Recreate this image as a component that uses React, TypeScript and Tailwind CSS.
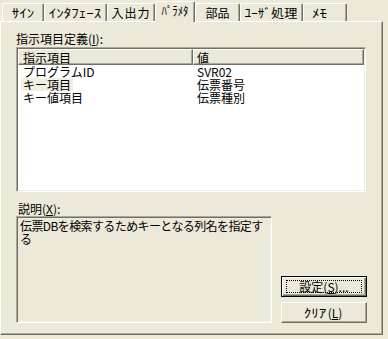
import React from "react";

function Tab({
  w,
  selected,
  extra,
  children,
}: {
  w: string;
  selected?: boolean;
  extra?: string;
  children: React.ReactNode;
}) {
  const base =
    "flex items-center border-t border-l border-t-white border-l-white border-r border-r-[#716F64] shadow-[inset_-1px_0_0_#ACA899] rounded-tl-[2px] rounded-tr-[2px] bg-[#ECE9D8] whitespace-nowrap";
  const state = selected ? "h-[21px] -mb-px pb-[3px]" : "h-[18px]";
  return (
    <div className={`${base} ${state} ${w} ${extra ?? "justify-center"}`}>
      {children}
    </div>
  );
}

export default function App() {
  return (
    <div className="w-[388px] h-[339px] bg-[#ECE9D8] text-black text-[12px] leading-[13px] font-['Noto_Sans_CJK_JP','Noto_Sans_CJK_JP',sans-serif] overflow-hidden">
      <div className="relative z-10 flex items-end h-[21px] pl-[2px]">
        <Tab w="w-[42px]">
          <span className="inline-block scale-x-125">ｻｲﾝ</span>
        </Tab>
        <Tab w="w-[63px]">
          <span className="inline-block scale-x-125">ｲﾝﾀﾌｪｰｽ</span>
        </Tab>
        <Tab w="w-[48px]">
          <span className="tracking-[1px]">入出力</span>
        </Tab>
        <Tab w="w-[40px]" selected>
          <span className="inline-block scale-x-[0.9]">ﾊﾟﾗﾒﾀ</span>
        </Tab>
        <Tab w="w-[45px]">部品</Tab>
        <Tab w="w-[63px]">
          <span className="inline-block scale-x-110">ﾕｰｻﾞ処理</span>
        </Tab>
        <Tab w="w-[44px]" extra="justify-start pl-[8px]">
          <span className="inline-block scale-x-125 origin-left">ﾒﾓ</span>
        </Tab>
      </div>

      <div className="w-[383px] h-[314px] border-l border-t border-l-white border-t-white border-r border-b border-r-[#716F64] border-b-[#716F64] shadow-[inset_-1px_-1px_0_#ACA899] pl-[15px] pt-[10px]">
        <div className="h-[13px] whitespace-nowrap">
          指示項目定義(<span className="underline">I</span>):
        </div>

        <div className="mt-[2px] w-[350px] h-[145px] bg-white border border-t-[#ACA899] border-l-[#ACA899] border-b-white border-r-white shadow-[inset_1px_1px_0_#716F64,inset_-1px_-1px_0_#F1EFE2] p-px">
          <div className="flex h-[16px]">
            <div className="w-[175px] h-full bg-[#ECE9D8] border-t border-l border-t-white border-l-white border-r border-b border-r-[#716F64] border-b-[#716F64] shadow-[inset_-1px_-1px_0_#ACA899] pl-[4px] flex items-center">
              指示項目
            </div>
            <div className="flex-1 h-full bg-[#ECE9D8] border-t border-l border-t-white border-l-white border-r border-b border-r-[#716F64] border-b-[#716F64] shadow-[inset_-1px_-1px_0_#ACA899] pl-[3px] flex items-center">
              値
            </div>
          </div>
          <div className="flex h-[13px]">
            <div className="w-[175px] pl-[5px] whitespace-nowrap">プログラムID</div>
            <div className="pl-[4px] whitespace-nowrap">SVR02</div>
          </div>
          <div className="flex h-[13px]">
            <div className="w-[175px] pl-[3px] whitespace-nowrap">
              <span className="inline-block h-[13px] px-[2px] bg-[#F1EFE2]">キー項目</span>
            </div>
            <div className="pl-[4px] whitespace-nowrap">伝票番号</div>
          </div>
          <div className="flex h-[13px]">
            <div className="w-[175px] pl-[5px] whitespace-nowrap">キー値項目</div>
            <div className="pl-[4px] whitespace-nowrap">伝票種別</div>
          </div>
        </div>

        <div className="mt-[10px] h-[13px] pl-[2px] whitespace-nowrap">
          説明(<span className="underline">X</span>):
        </div>

        <div className="mt-[1px] flex items-end">
          <div className="w-[256px] h-[107px] bg-[#ECE9D8] border border-t-[#ACA899] border-l-[#ACA899] border-b-white border-r-white shadow-[inset_1px_1px_0_#716F64,inset_-1px_-1px_0_#F1EFE2] pl-[3px] pt-[2px] tracking-[-0.6px] whitespace-nowrap">
            <div>伝票DBを検索するためキーとなる列名を指定す</div>
            <div>る</div>
          </div>
          <div className="ml-[9px] w-[86px] flex flex-col gap-[5px]">
            <div className="relative h-[21px] w-[86px] border border-black bg-[#ECE9D8] shadow-[inset_1px_1px_0_#fff,inset_-1px_-1px_0_#716F64,inset_-2px_-2px_0_#ACA899] flex items-center justify-center whitespace-nowrap">
              <div className="absolute left-[4px] right-[4px] top-[3px] bottom-[3px] border border-dotted border-black"></div>
              設定(<span className="underline">S</span>)...
            </div>
            <div className="h-[21px] w-[86px] bg-[#ECE9D8] border border-t-white border-l-white border-r-[#716F64] border-b-[#716F64] shadow-[inset_-1px_-1px_0_#ACA899] flex items-center justify-center whitespace-nowrap">
              <span className="inline-block scale-x-125 mr-[4px]">ｸﾘｱ</span>(<span className="underline">L</span>)
            </div>
          </div>
        </div>
      </div>
    </div>
  );
}
